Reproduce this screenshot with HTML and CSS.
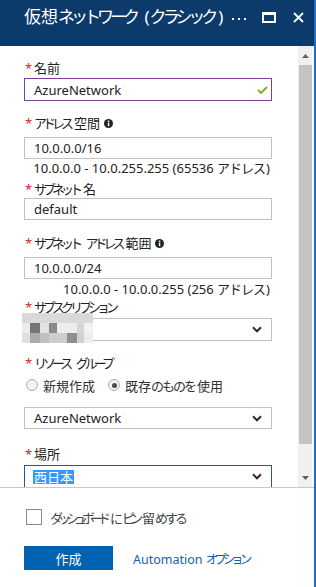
FILE: index.html
```html
<!DOCTYPE html>
<html lang="ja">
<head>
<meta charset="utf-8">
<title>仮想ネットワーク (クラシック)</title>
<link rel="stylesheet" href="styles.css">
</head>
<body>
<div class="blade">
  <header class="header">
    <h1 class="title">仮想<span class="k">ネットワーク</span> (<span class="k">クラシック</span>)</h1>
    <div class="actions">
      <span class="more"><svg width="14" height="3" viewBox="0 0 14 3"><rect x="0" y="0" width="2" height="2" fill="#fff"/><rect x="6" y="0" width="2" height="2" fill="#fff"/><rect x="12" y="0" width="2" height="2" fill="#fff"/></svg></span>
      <span class="max"><svg width="14" height="11" viewBox="0 0 14 11"><rect x="1" y="1" width="12" height="9" fill="none" stroke="#fff" stroke-width="2"/><rect x="0" y="0" width="14" height="3" fill="#fff"/></svg></span>
      <span class="close"><svg width="11" height="11" viewBox="0 0 11 11"><path d="M1 1 L10 10 M10 1 L1 10" stroke="#fff" stroke-width="1.8" fill="none"/></svg></span>
    </div>
  </header>

  <div class="main">
    <div class="scroll">
      <div class="label l1"><span class="req">*</span>名前</div>
      <div class="input tall purple i1">AzureNetwork<svg class="check" width="11" height="8" viewBox="0 0 11 8"><path d="M1 4 L4 7 L10 1" stroke="#72b02a" stroke-width="1.8" fill="none"/></svg></div>

      <div class="label l2"><span class="req">*</span><span class="k">アドレス</span>空間<svg class="info" width="9" height="9" viewBox="0 0 9 9"><circle cx="4.5" cy="4.5" r="4.5" fill="#222"/><rect x="3.8" y="3.6" width="1.5" height="3.6" fill="#fff"/><rect x="3.8" y="1.6" width="1.5" height="1.4" fill="#fff"/></svg></div>
      <div class="input i2">10.0.0.0/16</div>
      <div class="hint h1">10.0.0.0 - 10.0.255.255 (65536 <span class="ks">アドレス</span>)</div>

      <div class="label l3"><span class="req">*</span><span class="k">サブネット</span>名</div>
      <div class="input i3">default</div>

      <div class="label l4"><span class="req">*</span><span class="k">サブネット</span><span class="gap"> </span><span class="k">アドレス</span>範囲<svg class="info" width="9" height="9" viewBox="0 0 9 9"><circle cx="4.5" cy="4.5" r="4.5" fill="#222"/><rect x="3.8" y="3.6" width="1.5" height="3.6" fill="#fff"/><rect x="3.8" y="1.6" width="1.5" height="1.4" fill="#fff"/></svg></div>
      <div class="input i4">10.0.0.0/24</div>
      <div class="hint h2">10.0.0.0 - 10.0.0.255 (256 <span class="ks">アドレス</span>)</div>

      <div class="label l5"><span class="req">*</span><span class="k">サブスクリプション</span></div>
      <div class="input tall select i5">
        <svg class="chev" width="10" height="7" viewBox="0 0 10 7"><path d="M1 1.3 L5 5.3 L9 1.3" stroke="#2a2a2a" stroke-width="2" fill="none"/></svg>
        <svg class="mosaic" width="71" height="30" viewBox="0 0 71 30">
          <rect x="0" y="0" width="71" height="10" fill="#d9d9d9"/>
          <rect x="0" y="10" width="8" height="10" fill="#ececec"/>
          <rect x="8" y="10" width="10" height="10" fill="#747474"/>
          <rect x="18" y="10" width="9" height="10" fill="#e2e2e2"/>
          <rect x="27" y="10" width="8" height="10" fill="#8a8a8a"/>
          <rect x="35" y="10" width="20" height="10" fill="#ededed"/>
          <rect x="55" y="10" width="7" height="10" fill="#d6d6d6"/>
          <rect x="62" y="10" width="9" height="10" fill="#f2f2f2"/>
          <rect x="0" y="20" width="8" height="10" fill="#e0e0e0"/>
          <rect x="8" y="20" width="10" height="10" fill="#ababab"/>
          <rect x="18" y="20" width="9" height="10" fill="#c0c0c0"/>
          <rect x="27" y="20" width="18" height="10" fill="#cdcdcd"/>
          <rect x="45" y="20" width="10" height="10" fill="#8f8f8f"/>
          <rect x="55" y="20" width="7" height="10" fill="#d2d2d2"/>
          <rect x="62" y="20" width="9" height="10" fill="#ececec"/>
        </svg>
      </div>

      <div class="label l6"><span class="req">*</span><span class="k">リソース</span><span class="gap"> </span><span class="k">グループ</span></div>
      <div class="radios">
        <span class="radio"></span><span class="rtext">新規作成</span>
        <span class="radio on"></span><span class="rtext">既存<span class="h">のものを</span>使用</span>
      </div>
      <div class="input select i6">AzureNetwork<svg class="chev" width="10" height="7" viewBox="0 0 10 7"><path d="M1 1.3 L5 5.3 L9 1.3" stroke="#2a2a2a" stroke-width="2" fill="none"/></svg></div>

      <div class="label l7"><span class="req">*</span>場所</div>
      <div class="input tall select focus i7"><span class="sel">西日本</span><svg class="chev" width="10" height="7" viewBox="0 0 10 7"><path d="M1 1.3 L5 5.3 L9 1.3" stroke="#2a2a2a" stroke-width="2" fill="none"/></svg></div>
    </div>
    <div class="scrollbar">
      <div class="sb-btn"><svg width="7" height="4" viewBox="0 0 7 4"><path d="M0 4 L3.5 0 L7 4 Z" fill="#606060"/></svg></div>
      <div class="sb-thumb"></div>
      <div class="sb-track"></div>
      <div class="sb-btn"><svg width="7" height="4" viewBox="0 0 7 4"><path d="M0 0 L3.5 4 L7 0 Z" fill="#606060"/></svg></div>
    </div>
  </div>

  <footer class="footer">
    <label class="pin"><span class="box"></span><span class="pin-text"><span class="pk">ダッシュボード</span><span class="ph">に</span><span class="pk">ピン</span>留<span class="ph">めする</span></span></label>
    <div class="buttons">
      <span class="btn">作成</span>
      <span class="link">Automation <span class="k">オプション</span></span>
    </div>
  </footer>
</div>
</body>
</html>
```

FILE: styles.css
```css
html, body {
  margin: 0;
  padding: 0;
  background: #fff;
}
body {
  font-family: "Noto Sans", "Noto Sans CJK JP", sans-serif;
  font-size: 13px;
  color: #222;
}
.k { letter-spacing: -4px; padding-right: 4px; }
.ks { letter-spacing: -1px; padding-right: 1px; }
.h { letter-spacing: -2px; padding-right: 2px; }
.pk { letter-spacing: -5px; padding-right: 4px; }
.ph { letter-spacing: -3px; padding-right: 2px; }
.gap { letter-spacing: -1px; }
.blade {
  width: 316px;
  height: 587px;
  box-sizing: border-box;
  border-right: 2px solid #1e6ec6;
  display: flex;
  flex-direction: column;
  overflow: hidden;
}
.header {
  height: 46px;
  flex: none;
  box-sizing: border-box;
  background: #0c3b6b;
  display: flex;
  align-items: center;
  padding: 5px 10px 17px 24px;
}
.title {
  margin: 0;
  font-size: 17px;
  line-height: 24px;
  font-weight: normal;
  color: #fff;
  white-space: nowrap;
}
.actions {
  margin-left: auto;
  display: flex;
  align-items: center;
}
.actions span { display: flex; }
.more { margin-top: 4px; }
.max { margin-left: 16px; }
.close { margin-left: 17px; }

.main {
  height: 441px;
  flex: none;
  display: flex;
  border-bottom: 1px solid #c8c8c8;
}
.scroll {
  flex: 1;
  overflow: hidden;
  padding: 14px 26px 0 24px;
}
.label {
  height: 16px;
  line-height: 16px;
  display: flex;
  align-items: center;
  white-space: pre;
}
.req {
  display: inline-block;
  width: 10px;
  padding-left: 1px;
  box-sizing: border-box;
  color: #d0262c;
  align-self: flex-start;
  line-height: 16px;
}
.info { margin-left: 4px; }
.input {
  position: relative;
  box-sizing: border-box;
  width: 248px;
  height: 22px;
  border: 1px solid #c2c2c2;
  padding: 0 9px;
  display: flex;
  align-items: center;
  white-space: nowrap;
  color: #222;
}
.input.tall { height: 23px; }
.input.purple { border-color: #7d3f9c; }
.input.focus { border-color: #1f5a98; }
.check, .chev { margin-left: auto; }
.check { margin-right: -6px; }
.hint {
  line-height: 16px;
  height: 16px;
  text-align: right;
  padding-right: 2px;
  white-space: nowrap;
}
.mosaic {
  position: absolute;
  left: -3px;
  top: -6px;
}
.sel {
  background: #3399ff;
  color: #fff;
  line-height: 14px;
  margin-left: -1px;
  padding: 0 1px;
}

.l1 { margin-top: 0; }
.i1 { margin-top: 2px; }
.l2 { margin-top: 14px; }
.i2 { margin-top: 6px; }
.h1 { margin-top: 1px; }
.l3 { margin-top: 5px; }
.i3 { margin-top: 1px; }
.l4 { margin-top: 15px; }
.i4 { margin-top: 6px; }
.h2 { margin-top: 2px; }
.l5 { margin-top: 2px; }
.i5 { margin-top: 3px; }
.l6 { margin-top: 14px; }
.i6 { margin-top: 14px; }
.l7 { margin-top: 17px; }
.i7 { margin-top: 3px; }

.radios {
  margin-top: 6px;
  height: 16px;
  display: flex;
  align-items: center;
  padding-left: 2px;
  color: #333;
}
.radio {
  width: 12px;
  height: 12px;
  box-sizing: border-box;
  border: 1px solid #aeaeae;
  border-radius: 50%;
  background: #f2f2f2;
  display: flex;
  align-items: center;
  justify-content: center;
}
.radio.on::after {
  content: "";
  width: 5px;
  height: 5px;
  border-radius: 50%;
  background: #4a4a4a;
}
.rtext { margin-left: 5px; }
.radio.on { margin-left: 13px; }

.scrollbar {
  width: 14px;
  margin-right: 2px;
  background: #f0f0f0;
  display: flex;
  flex-direction: column;
}
.sb-btn {
  height: 19px;
  display: flex;
  align-items: center;
  justify-content: center;
  padding-left: 1px;
}
.sb-thumb {
  height: 379px;
  margin-left: 1px;
  background: #c3c3c3;
}
.sb-track { flex: 1; }

.footer {
  flex: 1;
  padding: 21px 0 0 24px;
}
.pin {
  display: flex;
  align-items: center;
  height: 16px;
  padding-left: 2px;
}
.box {
  width: 16px;
  height: 16px;
  box-sizing: border-box;
  border: 1px solid #8a8a8a;
  background: #fff;
}
.pin-text {
  margin-left: 8px;
  color: #444;
  white-space: nowrap;
}
.buttons {
  margin-top: 21px;
  display: flex;
  align-items: center;
}
.btn {
  width: 89px;
  height: 24px;
  background: #0063b1;
  color: #fff;
  display: flex;
  align-items: center;
  justify-content: center;
}
.link {
  margin-left: 20px;
  color: #1560b0;
  white-space: nowrap;
  font-size: 12.5px;
}
```
